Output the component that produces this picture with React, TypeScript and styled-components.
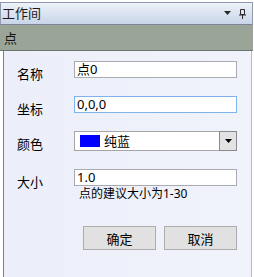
import React from 'react';
import styled, { createGlobalStyle } from 'styled-components';

const GlobalStyle = createGlobalStyle`
  html, body {
    margin: 0;
    padding: 0;
    background: #ffffff;
  }
  body {
    font-family: "Noto Sans", "Noto Sans CJK SC", sans-serif;
    font-size: 13px;
    color: #000000;
  }
`;

const Frame = styled.div`
  width: 254px;
  height: 277px;
  padding-top: 2px;
  box-sizing: border-box;
  display: flex;
  flex-direction: column;
  overflow: hidden;
`;

const TitleBar = styled.div`
  height: 23px;
  margin: 0 1px 0 0;
  box-sizing: border-box;
  border: 1px solid #8e9bb0;
  border-bottom-color: #7d8696;
  background: linear-gradient(to bottom, #eef2f9, #c9d5e8);
  display: flex;
  align-items: center;
  padding: 0 6px 0 1px;
  font-size: 13px;
  color: #1a1a1a;
`;

const TitleText = styled.span`
  flex: 1;
  line-height: 1;
`;

const TitleIcons = styled.div`
  display: flex;
  align-items: center;
  gap: 7px;
`;

const SubHeader = styled.div`
  height: 26px;
  margin-right: 1px;
  box-sizing: border-box;
  background: #9aa597;
  border-bottom: 1px solid #6e7470;
  display: flex;
  align-items: center;
  padding-left: 4px;
  font-size: 13px;
  color: #111111;
`;

const Body = styled.div`
  flex: 1;
  margin: 0 2px 0 3px;
  border-left: 1px solid #7b7f88;
  border-right: 1px solid #b3bccb;
  background: linear-gradient(to right, #eceff9, #f0f3fb);
  padding: 10px 14px 0 13px;
`;

const Form = styled.div`
  display: grid;
  grid-template-columns: 57px 163px;
  row-gap: 18px;
  align-items: start;
`;

const Label = styled.div`
  padding-top: 5px;
  margin-bottom: -5px;
  line-height: 17px;
`;

const Field = styled.div`
  display: flex;
  flex-direction: column;
`;

const TextBox = styled.div<{ $focused?: boolean }>`
  height: 17px;
  box-sizing: border-box;
  border: 1px solid ${({ $focused }) => ($focused ? '#7eb4ea' : '#a9abb0')};
  background: #ffffff;
  padding-left: 2px;
  display: flex;
  align-items: center;
  line-height: 1;
`;

const Hint = styled.div`
  padding-left: 5px;
  margin-top: 1px;
  font-size: 12px;
  line-height: 13px;
`;

const Combo = styled.div`
  height: 20px;
  box-sizing: border-box;
  border: 1px solid #a6a6a6;
  background: #ffffff;
  display: flex;
  align-items: center;
  padding-left: 5px;
`;

const Swatch = styled.span<{ $color: string }>`
  width: 20px;
  height: 12px;
  background: ${({ $color }) => $color};
  margin-right: 4px;
`;

const ComboText = styled.span`
  flex: 1;
  line-height: 1;
`;

const ComboButton = styled.div`
  width: 18px;
  height: 20px;
  box-sizing: border-box;
  border: 1px solid #8a8a8a;
  background: #e3e3e3;
  margin-right: -1px;
  display: flex;
  align-items: center;
  justify-content: center;
`;

const Buttons = styled.div`
  display: flex;
  justify-content: flex-end;
  gap: 8px;
  width: 220px;
  margin-top: 26px;
`;

const Button = styled.button`
  width: 73px;
  height: 24px;
  border: 1px solid #adadad;
  background: #e1e1e1;
  font-family: inherit;
  font-size: 13px;
  color: #000000;
  padding: 0;
`;

const DropTriangle = () => (
  <svg width="8" height="5" viewBox="0 0 8 5">
    <path d="M0 0h7L3.5 4z" fill="#2b2b2b" />
  </svg>
);

const PinIcon = () => (
  <svg width="7" height="10" viewBox="0 0 7 10">
    <path d="M1.5 0.5h4v5h-4z" fill="none" stroke="#2b2b2b" />
    <path d="M0 6h7" stroke="#2b2b2b" />
    <path d="M3.5 6v4" stroke="#2b2b2b" />
  </svg>
);

const ChevronDown = () => (
  <svg width="7" height="5" viewBox="0 0 7 5">
    <path d="M0 0h7L3.5 4z" fill="#000000" />
  </svg>
);

export default function App() {
  return (
    <>
      <GlobalStyle />
      <Frame>
        <TitleBar>
          <TitleText>工作间</TitleText>
          <TitleIcons>
            <DropTriangle />
            <PinIcon />
          </TitleIcons>
        </TitleBar>
        <SubHeader>点</SubHeader>
        <Body>
          <Form>
            <Label>名称</Label>
            <TextBox>点0</TextBox>

            <Label>坐标</Label>
            <TextBox $focused>0,0,0</TextBox>

            <Label>颜色</Label>
            <Combo>
              <Swatch $color="#0000ff" />
              <ComboText>纯蓝</ComboText>
              <ComboButton>
                <ChevronDown />
              </ComboButton>
            </Combo>

            <Label>大小</Label>
            <Field>
              <TextBox>1.0</TextBox>
              <Hint>点的建议大小为1-30</Hint>
            </Field>
          </Form>
          <Buttons>
            <Button>确定</Button>
            <Button>取消</Button>
          </Buttons>
        </Body>
      </Frame>
    </>
  );
}
